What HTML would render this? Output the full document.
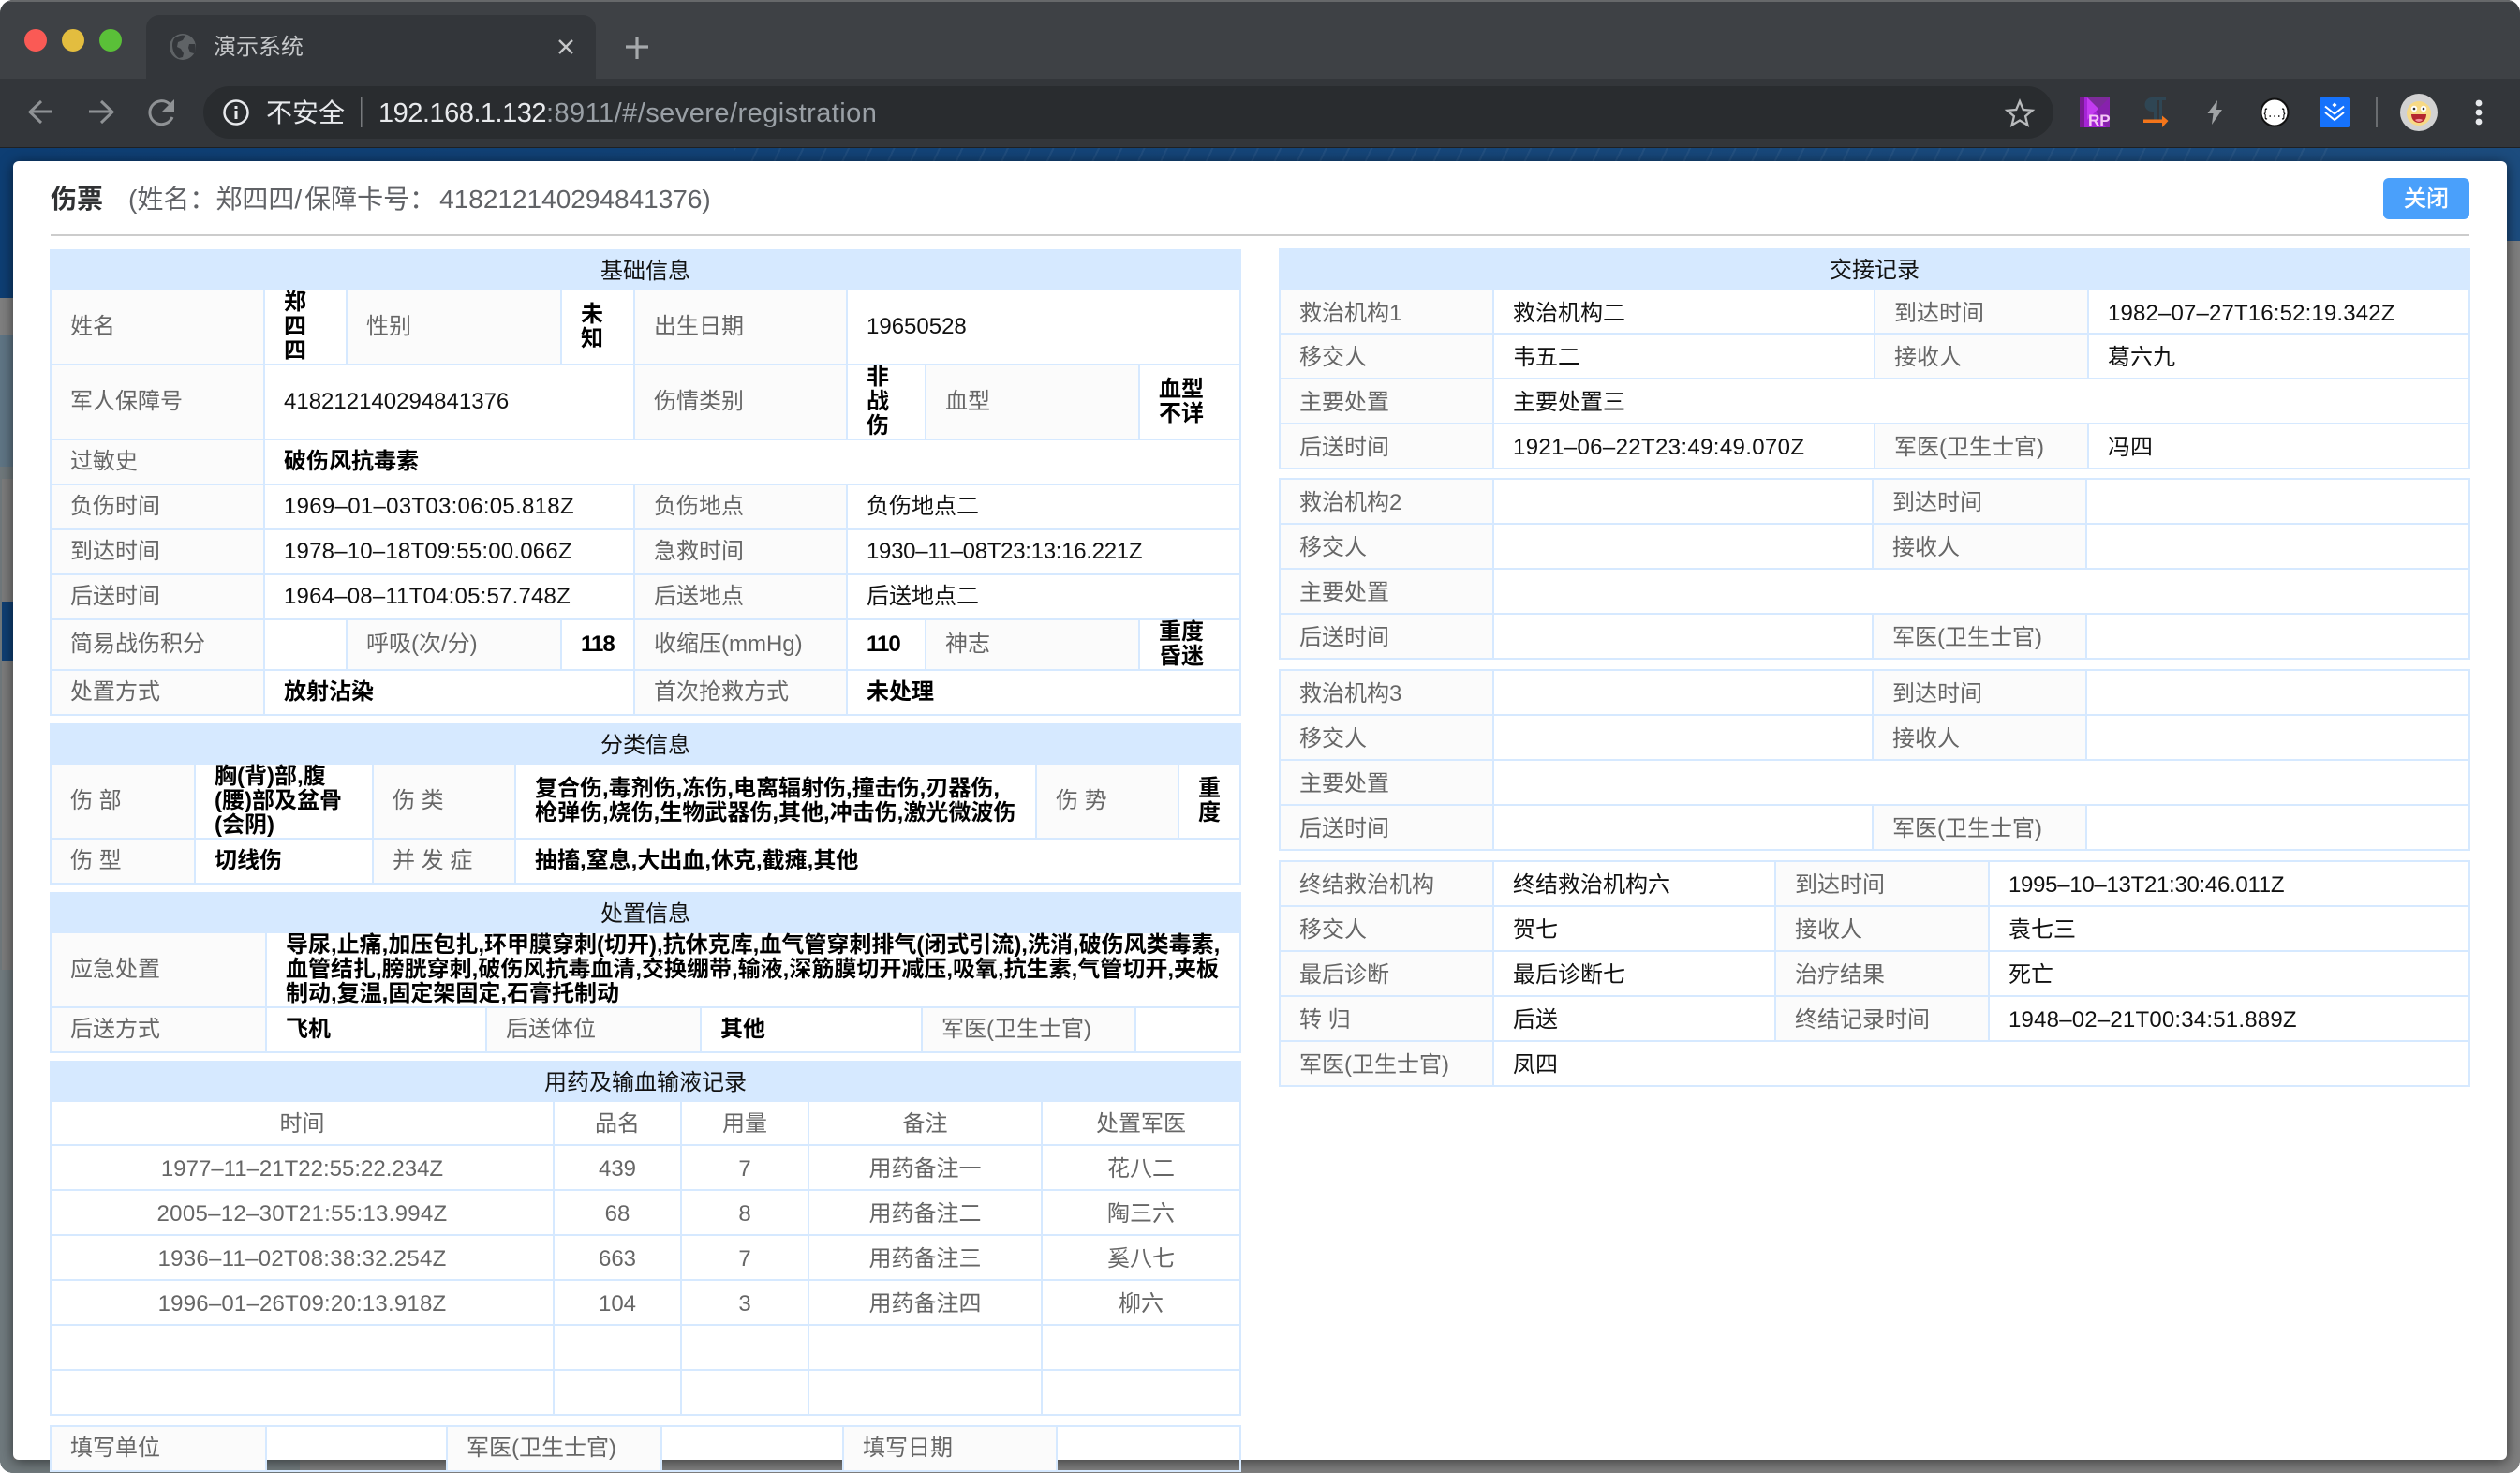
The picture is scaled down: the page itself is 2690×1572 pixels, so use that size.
<!DOCTYPE html>
<html lang="zh">
<head>
<meta charset="utf-8">
<title>演示系统</title>
<style>
html,body{margin:0;padding:0;background:#fff;}
body{width:2690px;height:1572px;overflow:hidden;position:relative;font-family:"Liberation Sans","Noto Sans CJK SC",sans-serif;}
#win{position:absolute;left:0;top:0;width:2690px;height:1572px;overflow:hidden;border-radius:14px;background:#7f7f7f;}
.a{position:absolute;}
table.t{position:absolute;border-collapse:collapse;table-layout:fixed;font-size:24px;line-height:26px;color:#111;}
table.t td{border:2px solid #d6e9ff;padding:0 20px;white-space:nowrap;vertical-align:middle;overflow:visible;}
table.r td{padding-top:4px;}
table.t td.h{background:#d6e9ff;text-align:center;color:#111;padding:3px 0 0;}
table.t td.l{background:#fbfbfb;color:#666;}
table.t td.b{font-weight:bold;color:#000;}
table.t.c td{text-align:center;color:#666;padding:3px 0 0;}
#url{position:absolute;left:404px;top:103px;font-size:29px;line-height:36px;color:#9aa0a6;white-space:nowrap;letter-spacing:.45px;}
#url span{color:#e8eaed;letter-spacing:-.5px;}
.n{letter-spacing:-1px;}
</style>
</head>
<body>
<div id="win">
  <!-- backdrop -->
  <div class="a" style="left:0;top:157px;width:2690px;height:1415px;background:#7f7f7f;"></div>
  <div class="a" style="left:0;top:157px;width:2690px;height:161px;background:linear-gradient(90deg,#0e3e73,#1c4c7e);"></div>
  <div class="a" style="left:784px;top:157px;width:1716px;height:15px;background:repeating-linear-gradient(115deg,rgba(255,255,255,.05) 0 2px,transparent 2px 22px);"></div>
  <div class="a" style="left:0;top:318px;width:14px;height:39px;background:#7f7f7f;"></div>
  <div class="a" style="left:0;top:357px;width:14px;height:141px;background:#5f7585;"></div>
  <div class="a" style="left:0;top:498px;width:14px;height:537px;background:#6f787b;"></div>
  <div class="a" style="left:2px;top:511px;width:12px;height:524px;background:#7c7c7c;"></div>
  <div class="a" style="left:2px;top:642px;width:12px;height:63px;background:#0f3f73;"></div>
  <div class="a" style="left:0;top:1035px;width:14px;height:537px;background:#707a7e;"></div>
  <div class="a" style="left:0;top:1558px;width:320px;height:14px;background:#70797c;"></div>
  <div class="a" style="left:2676px;top:257px;width:14px;height:1315px;background:#7f7f7f;"></div>

  <!-- chrome -->
  <div class="a" style="left:0;top:0;width:2690px;height:84px;background:#3e4145;"></div>
  <div class="a" style="left:0;top:0;width:2690px;height:2px;background:#66686a;"></div>
  <div class="a" style="left:0;top:84px;width:2690px;height:73px;background:#33363a;border-bottom:1px solid #1f2123;"></div>
  <div class="a" style="left:156px;top:16px;width:480px;height:68px;background:#33363a;border-radius:14px 14px 0 0;"></div>
  <div class="a" style="left:217px;top:92px;width:1975px;height:56px;background:#292c2f;border-radius:28px;"></div>

  <svg class="a" style="left:0;top:0;" width="2690" height="157" viewBox="0 0 2690 157">
    <circle cx="38" cy="43" r="12" fill="#fa5a55"/>
    <circle cx="78" cy="43" r="12" fill="#e3bd3f"/>
    <circle cx="118" cy="43" r="12" fill="#5ac038"/>
    <!-- globe -->
    <circle cx="195" cy="50" r="14" fill="#5f6366"/>
    <path d="M186 41c4-3 9-4 12-3l-3 5-5 2-1 5 4 2 3 5-1 4-4 1c-5-3-7-9-7-14 0-3 1-5 2-7zM202 47l6 0c1 3 1 7-1 10l-4-1-2-5z" fill="#33363a"/>
    <!-- tab close / plus -->
    <path d="M597 43l14 14M611 43l-14 14" stroke="#c5c7c9" stroke-width="2.4" fill="none"/>
    <path d="M680 39v24M668 50h24" stroke="#a6a9ac" stroke-width="3.2" fill="none"/>
    <!-- nav -->
    <path d="M56 119H33M44 108L32 119.500 44 131" stroke="#8f9295" stroke-width="3" fill="none"/>
    <path d="M95 119H119M108 108L120 119.500 108 131" stroke="#8f9295" stroke-width="3" fill="none"/>
    <path d="M181 111A12.500 12.500 0 1 0 184 125" stroke="#8f9295" stroke-width="3" fill="none"/>
    <path d="M186 106V119H173Z" fill="#8f9295"/>
    <!-- info -->
    <circle cx="252" cy="120" r="12.500" stroke="#e8eaed" stroke-width="2.500" fill="none"/>
    <rect x="250.500" y="113" width="3" height="3" fill="#e8eaed"/>
    <rect x="250.500" y="118" width="3" height="9" fill="#e8eaed"/>
    <rect x="385" y="104" width="1.500" height="32" fill="#777a7d"/>
    <!-- star -->
    <path d="M2156 108l3.800 9 9.700 .8-7.400 6.300 2.300 9.500-8.400-5.100-8.400 5.100 2.300-9.500-7.400-6.300 9.700-.8z" stroke="#b9bbbd" stroke-width="2.300" fill="none" stroke-linejoin="miter"/>
    <!-- RP -->
    <rect x="2220" y="104" width="32" height="32" fill="#a524d6"/>
    <rect x="2220" y="104" width="5" height="32" fill="#7a1a94"/>
    <path d="M2228 104h24v32h-4z" fill="#6f1f8c" opacity=".55"/>
    <path d="M2228 104l24 0 0 0-12 12z" fill="#7d2b9a"/>
    <path d="M2228 104l12 12-12 12z" fill="#c33bf0"/>
    <text x="2229" y="134" font-family="Liberation Sans,sans-serif" font-size="17" font-weight="bold" fill="#f5c8f5">RP</text>
    <!-- pilcrow -->
    <path d="M2312 104h-15a7 7 0 0 0 0 15h2v9h3v-21h3v21h3v-21h4z" fill="#2f4654"/>
    <path d="M2288 127.500h20v-4l6.500 5.500-6.500 7v-5h-20z" fill="#f4751a"/>
    <!-- bolt -->
    <path d="M2367 107L2356.500 121H2362.500L2361 133L2372 117H2366Z" fill="#a0a3a5"/>
    <!-- braces -->
    <circle cx="2428" cy="120" r="14.500" fill="#fff" stroke="#111" stroke-width="2"/>
    <text x="2428" y="125" text-anchor="middle" font-family="Liberation Mono,monospace" font-size="13" font-weight="bold" fill="#000" textLength="24" lengthAdjust="spacingAndGlyphs">{...}</text>
    <!-- blue -->
    <rect x="2476" y="104" width="32" height="32" rx="2" fill="#1672fb"/>
    <path d="M2492 109.500l2.500 2.500-2.500 2.500-2.500-2.500z" fill="#fff"/>
    <path d="M2482 113.500l10 8 10-8M2482 120l10 8 10-8" stroke="#fff" stroke-width="2" fill="none"/>
    <rect x="2536" y="104" width="2" height="32" fill="#6a6d70"/>
    <!-- avatar -->
    <circle cx="2582" cy="120" r="20" fill="#d2d2d2"/>
    <circle cx="2582" cy="121" r="13" fill="#f7d985"/>
    <circle cx="2577" cy="116" r="3.200" fill="#fff"/>
    <circle cx="2587" cy="116" r="3.200" fill="#fff"/>
    <circle cx="2577" cy="116" r="1.300" fill="#333"/>
    <circle cx="2587" cy="116" r="1.300" fill="#333"/>
    <path d="M2574 122h16c0 6-4 9-8 9s-8-3-8-9z" fill="#b5262f"/>
    <path d="M2578 128c2-1.500 6-1.500 8 0-2 2.500-6 2.500-8 0z" fill="#f2909a"/>
    <circle cx="2646" cy="110" r="3.400" fill="#e8eaed"/>
    <circle cx="2646" cy="120" r="3.400" fill="#e8eaed"/>
    <circle cx="2646" cy="130" r="3.400" fill="#e8eaed"/>
  </svg>

  <div class="a" style="left:228px;top:35px;font-size:24px;line-height:32px;color:#c5c7c9;white-space:nowrap;">演示系统</div>
  <div class="a" style="left:284px;top:101px;font-size:28px;line-height:40px;color:#e8eaed;white-space:nowrap;">不安全</div>
  <div id="url"><span>192.168.1.132</span>:8911/#/severe/registration</div>

  <!-- modal -->
  <div class="a" style="left:14px;top:172px;width:2662px;height:1386px;background:#fff;border-radius:6px;box-shadow:0 2px 14px rgba(0,0,0,.55);"></div>
  <div class="a" style="left:54px;top:193px;font-size:28px;line-height:40px;font-weight:bold;color:#303133;white-space:nowrap;">伤票</div>
  <div class="a" style="left:137px;top:193px;font-size:28px;line-height:40px;color:#606266;white-space:nowrap;">(姓名：郑四四/<span style="margin-left:3px"></span>保障卡号：<span style="margin-left:4px"></span>418212140294841376)</div>
  <div class="a" style="left:2544px;top:190px;width:92px;height:44px;background:#4aa0fb;border-radius:6px;color:#fff;font-size:24px;line-height:46px;text-align:center;-webkit-text-stroke:.5px #fff;">关闭</div>
  <div class="a" style="left:54px;top:250px;width:2582px;height:2px;background:#ccc;"></div>

  <!-- 基础信息 -->
  <table class="t" style="left:53px;top:266px;width:1270px;">
    <colgroup><col style="width:228px"><col style="width:88px"><col style="width:229px"><col style="width:78px"><col style="width:227px"><col style="width:84px"><col style="width:228px"><col style="width:108px"></colgroup>
    <tr style="height:42px"><td class="h" colspan="8">基础信息</td></tr>
    <tr style="height:79px"><td class="l">姓名</td><td class="b">郑<br>四<br>四</td><td class="l">性别</td><td class="b">未<br>知</td><td class="l">出生日期</td><td colspan="3">19650528</td></tr>
    <tr style="height:80px"><td class="l">军人保障号</td><td colspan="3">418212140294841376</td><td class="l">伤情类别</td><td class="b">非<br>战<br>伤</td><td class="l">血型</td><td class="b">血型<br>不详</td></tr>
    <tr style="height:48px"><td class="l">过敏史</td><td class="b" colspan="7">破伤风抗毒素</td></tr>
    <tr style="height:48px"><td class="l">负伤时间</td><td colspan="3"><span style="letter-spacing:.29px">1969–01–03T03:06:05.818Z</span></td><td class="l">负伤地点</td><td colspan="3">负伤地点二</td></tr>
    <tr style="height:48px"><td class="l">到达时间</td><td colspan="3"><span style="letter-spacing:.2px">1978–10–18T09:55:00.066Z</span></td><td class="l">急救时间</td><td colspan="3"><span style="letter-spacing:-.29px">1930–11–08T23:13:16.221Z</span></td></tr>
    <tr style="height:48px"><td class="l">后送时间</td><td colspan="3"><span style="letter-spacing:.2px">1964–08–11T04:05:57.748Z</span></td><td class="l">后送地点</td><td colspan="3">后送地点二</td></tr>
    <tr style="height:54px"><td class="l">简易战伤积分</td><td></td><td class="l">呼吸(次/分)</td><td class="b"><span class="n">118</span></td><td class="l">收缩压(mmHg)</td><td class="b"><span class="n">110</span></td><td class="l">神志</td><td class="b">重度<br>昏迷</td></tr>
    <tr style="height:48px"><td class="l">处置方式</td><td class="b" colspan="3">放射沾染</td><td class="l">首次抢救方式</td><td class="b" colspan="3">未处理</td></tr>
  </table>

  <!-- 分类信息 -->
  <table class="t" style="left:53px;top:772px;width:1270px;">
    <colgroup><col style="width:154px"><col style="width:190px"><col style="width:152px"><col style="width:556px"><col style="width:152px"><col style="width:66px"></colgroup>
    <tr style="height:42px"><td class="h" colspan="6">分类信息</td></tr>
    <tr style="height:79px"><td class="l">伤 部</td><td class="b">胸(背)部,腹<br>(腰)部及盆骨<br>(会阴)</td><td class="l">伤 类</td><td class="b">复合伤,毒剂伤,冻伤,电离辐射伤,撞击伤,刃器伤,<br>枪弹伤,烧伤,生物武器伤,其他,冲击伤,激光微波伤</td><td class="l">伤 势</td><td class="b">重<br>度</td></tr>
    <tr style="height:48px"><td class="l">伤 型</td><td class="b">切线伤</td><td class="l">并 发 症</td><td class="b" colspan="3">抽搐,窒息,大出血,休克,截瘫,其他</td></tr>
  </table>

  <!-- 处置信息 -->
  <table class="t" style="left:53px;top:952px;width:1270px;">
    <colgroup><col style="width:230px"><col style="width:235px"><col style="width:229px"><col style="width:236px"><col style="width:228px"><col style="width:112px"></colgroup>
    <tr style="height:42px"><td class="h" colspan="6">处置信息</td></tr>
    <tr style="height:79px"><td class="l">应急处置</td><td class="b" colspan="5">导尿,止痛,加压包扎,环甲膜穿刺(切开),抗休克库,血气管穿刺排气(闭式引流),洗消,破伤风类毒素,<br>血管结扎,膀胱穿刺,破伤风抗毒血清,交换绷带,输液,深筋膜切开减压,吸氧,抗生素,气管切开,夹板<br>制动,复温,固定架固定,石膏托制动</td></tr>
    <tr style="height:48px"><td class="l">后送方式</td><td class="b">飞机</td><td class="l">后送体位</td><td class="b">其他</td><td class="l">军医(卫生士官)</td><td></td></tr>
  </table>

  <!-- 用药 -->
  <table class="t c" style="left:53px;top:1132px;width:1270px;">
    <colgroup><col style="width:537px"><col style="width:136px"><col style="width:136px"><col style="width:249px"><col style="width:212px"></colgroup>
    <tr style="height:42px"><td class="h" colspan="5" style="color:#111">用药及输血输液记录</td></tr>
    <tr style="height:47px"><td>时间</td><td>品名</td><td>用量</td><td>备注</td><td>处置军医</td></tr>
    <tr style="height:48px"><td>1977–11–21T22:55:22.234Z</td><td>439</td><td>7</td><td>用药备注一</td><td>花八二</td></tr>
    <tr style="height:48px"><td><span style="letter-spacing:.29px">2005–12–30T21:55:13.994Z</span></td><td>68</td><td>8</td><td>用药备注二</td><td>陶三六</td></tr>
    <tr style="height:48px"><td><span style="letter-spacing:.29px">1936–11–02T08:38:32.254Z</span></td><td>663</td><td>7</td><td>用药备注三</td><td>奚八七</td></tr>
    <tr style="height:48px"><td><span style="letter-spacing:.2px">1996–01–26T09:20:13.918Z</span></td><td>104</td><td>3</td><td>用药备注四</td><td>柳六</td></tr>
    <tr style="height:48px"><td></td><td></td><td></td><td></td><td></td></tr>
    <tr style="height:48px"><td></td><td></td><td></td><td></td><td></td></tr>
  </table>

  <!-- 填写 -->
  <table class="t" style="left:53px;top:1521px;width:1270px;">
    <colgroup><col style="width:230px"><col style="width:193px"><col style="width:229px"><col style="width:194px"><col style="width:228px"><col style="width:196px"></colgroup>
    <tr style="height:48px"><td class="l">填写单位</td><td></td><td class="l">军医(卫生士官)</td><td></td><td class="l">填写日期</td><td></td></tr>
  </table>

  <!-- 交接记录 -->
  <table class="t r" style="left:1365px;top:265px;width:1270px;">
    <colgroup><col style="width:228px"><col style="width:407px"><col style="width:228px"><col style="width:407px"></colgroup>
    <tr style="height:43px"><td class="h" colspan="4">交接记录</td></tr>
    <tr style="height:47px"><td class="l">救治机构1</td><td>救治机构二</td><td class="l">到达时间</td><td><span style="letter-spacing:.15px">1982–07–27T16:52:19.342Z</span></td></tr>
    <tr style="height:48px"><td class="l">移交人</td><td>韦五二</td><td class="l">接收人</td><td>葛六九</td></tr>
    <tr style="height:48px"><td class="l">主要处置</td><td colspan="3">主要处置三</td></tr>
    <tr style="height:48px"><td class="l">后送时间</td><td><span style="letter-spacing:.35px">1921–06–22T23:49:49.070Z</span></td><td class="l">军医(卫生士官)</td><td>冯四</td></tr>
  </table>

  <table class="t r" style="left:1365px;top:510px;width:1270px;">
    <colgroup><col style="width:228px"><col style="width:405px"><col style="width:228px"><col style="width:409px"></colgroup>
    <tr style="height:48px"><td class="l">救治机构2</td><td></td><td class="l">到达时间</td><td></td></tr>
    <tr style="height:48px"><td class="l">移交人</td><td></td><td class="l">接收人</td><td></td></tr>
    <tr style="height:48px"><td class="l">主要处置</td><td colspan="3"></td></tr>
    <tr style="height:48px"><td class="l">后送时间</td><td></td><td class="l">军医(卫生士官)</td><td></td></tr>
  </table>

  <table class="t r" style="left:1365px;top:714px;width:1270px;">
    <colgroup><col style="width:228px"><col style="width:405px"><col style="width:228px"><col style="width:409px"></colgroup>
    <tr style="height:48px"><td class="l">救治机构3</td><td></td><td class="l">到达时间</td><td></td></tr>
    <tr style="height:48px"><td class="l">移交人</td><td></td><td class="l">接收人</td><td></td></tr>
    <tr style="height:48px"><td class="l">主要处置</td><td colspan="3"></td></tr>
    <tr style="height:48px"><td class="l">后送时间</td><td></td><td class="l">军医(卫生士官)</td><td></td></tr>
  </table>

  <table class="t r" style="left:1365px;top:918px;width:1270px;">
    <colgroup><col style="width:228px"><col style="width:301px"><col style="width:228px"><col style="width:513px"></colgroup>
    <tr style="height:48px"><td class="l">终结救治机构</td><td>终结救治机构六</td><td class="l">到达时间</td><td><span style="letter-spacing:-.29px">1995–10–13T21:30:46.011Z</span></td></tr>
    <tr style="height:48px"><td class="l">移交人</td><td>贺七</td><td class="l">接收人</td><td>袁七三</td></tr>
    <tr style="height:48px"><td class="l">最后诊断</td><td>最后诊断七</td><td class="l">治疗结果</td><td>死亡</td></tr>
    <tr style="height:48px"><td class="l">转 归</td><td>后送</td><td class="l">终结记录时间</td><td><span style="letter-spacing:.2px">1948–02–21T00:34:51.889Z</span></td></tr>
    <tr style="height:48px"><td class="l">军医(卫生士官)</td><td colspan="3">凤四</td></tr>
  </table>
</div>
</body>
</html>
